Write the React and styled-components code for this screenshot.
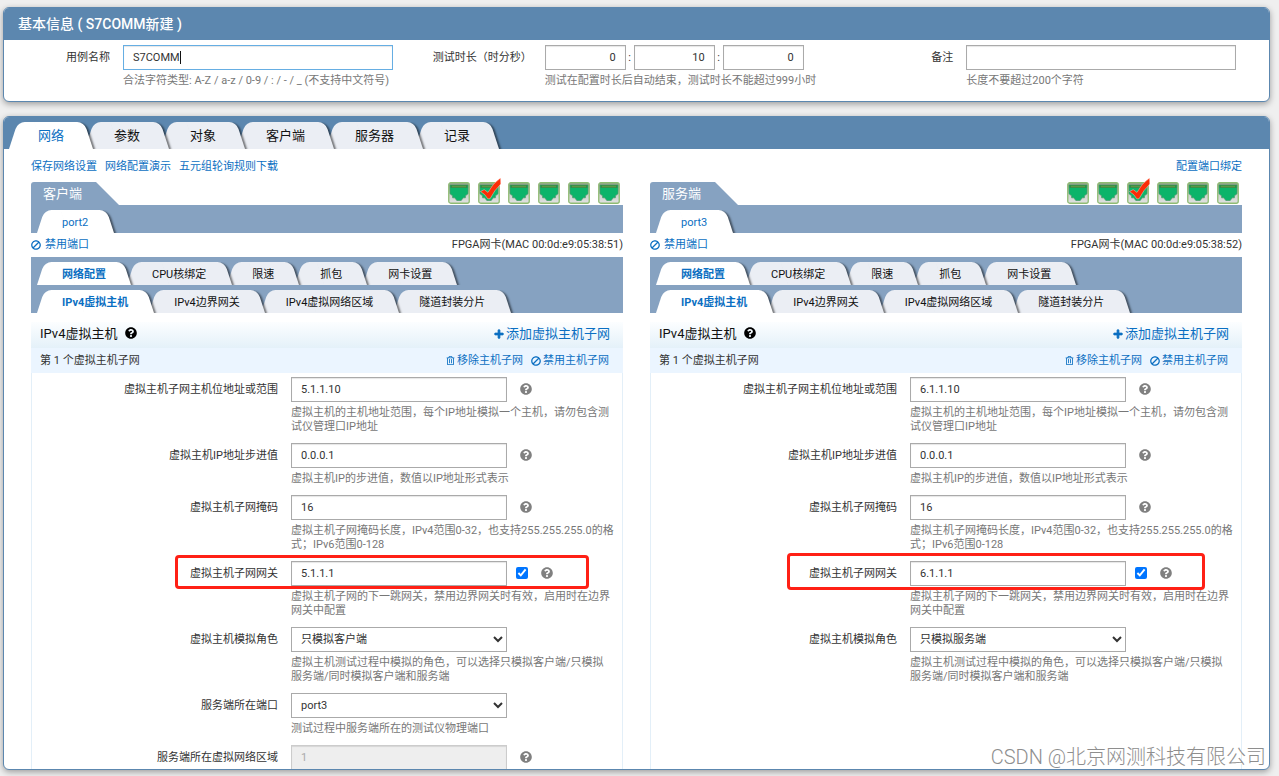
import React, { useEffect, useId, useRef, useState } from "react";
import styled, { createGlobalStyle, css } from "styled-components";
import { FaBan, FaPlus, FaQuestionCircle, FaRegTrashAlt } from "react-icons/fa";

const GlobalStyle = createGlobalStyle`
  * { box-sizing: border-box; }
  body {
    margin: 0;
    background: #efefef;
    color: #333;
    font-family: Roboto, "Noto Sans CJK SC", sans-serif;
    font-size: 11px;
    line-height: 14px;
  }
  button, input, select { font: inherit; }
`;

const Page = styled.main`
  position: relative;
  display: flex;
  flex-direction: column;
  gap: 14px;
  height: 100vh;
  padding: 7px 9px 6px 3px;
  overflow: hidden;
`;

const Panel = styled.section`
  display: flex;
  flex-direction: column;
  flex: ${({ $fill }) => ($fill ? "1 1 0" : "none")};
  min-height: 0;
  overflow: hidden;
  background: #fff;
  border: 1px solid #5c87af;
  border-radius: 6px;
  box-shadow: 0 2px 6px rgba(0, 0, 0, 0.35);
`;

const PanelHeader = styled.header`
  display: flex;
  flex: none;
  align-items: ${({ $tabs }) => ($tabs ? "flex-end" : "center")};
  height: 32px;
  padding: ${({ $tabs }) => ($tabs ? "0 5px" : "0 14px")};
  background: #5c87af;
`;

const PanelTitle = styled.h1`
  margin: 0;
  color: #fff;
  font-size: 14px;
  line-height: 20px;
  font-weight: 500;
`;

const InfoForm = styled.form`
  display: grid;
  grid-template-columns: repeat(3, 1fr);
  padding: 5px 0 13px;
`;

const Row = styled.div`
  position: relative;
  display: grid;
  grid-template-columns: ${({ $wide }) => ($wide ? "259px" : "119px")} 1fr;
  padding: ${({ $wide }) => ($wide ? "0 8px 9px 0" : "0")};
`;

const Label = styled.label`
  padding-right: 13px;
  line-height: 25px;
  text-align: right;
  color: #333;
`;

const Controls = styled.div`
  position: relative;
  display: flex;
  align-items: center;
  height: 25px;
`;

const fieldBox = css`
  width: ${({ $size }) => ({ lg: "270px", md: "216px", sm: "81px" })[$size]};
  height: 25px;
  border: 1px solid #aaa;
  border-radius: 0;
  background: #fff;
  color: #333;
  outline: none;

  &:focus { border-color: #66aee3; }
  &:disabled {
    border-color: #ccc;
    background: #eee;
    color: #aaa;
  }
`;

const Input = styled.input`
  ${fieldBox}
  padding: 0 9px;
  text-align: ${({ $size }) => ($size === "sm" ? "right" : "left")};
  caret-color: ${({ $hideCaret }) => ($hideCaret ? "transparent" : "auto")};
  box-shadow: inset 0 1px 1px rgba(0, 0, 0, 0.1);
`;

const Caret = styled.span`
  position: absolute;
  top: 6px;
  left: 57px;
  width: 1px;
  height: 13px;
  background: #111;
  pointer-events: none;
`;

const Select = styled.select`
  ${fieldBox}
  padding: 0 0 0 5px;
`;

const Colon = styled.span`
  width: 8px;
  text-align: center;
`;

const Hint = styled.p`
  margin: 4px 0 0;
  color: #777;
`;

const Checkbox = styled.input`
  width: 12px;
  height: 12px;
  margin: 0 0 1px 9px;
  accent-color: #0075ff;
`;

const IconButton = styled.button`
  display: inline-flex;
  margin-left: ${({ $dark }) => ($dark ? "8px" : "13px")};
  padding: 0 0 2px;
  border: 0;
  background: none;
  color: ${({ $dark }) => ($dark ? "#000" : "#808080")};
  font-size: 12px;
  cursor: pointer;
`;

const BanIcon = styled(FaBan)`
  transform: scaleX(-1);
`;

const PlusIcon = styled(FaPlus)`
  stroke: currentColor;
  stroke-width: 40px;
`;

const Marker = styled.div`
  position: absolute;
  z-index: 2;
  pointer-events: none;
  border: 3px solid #ff2015;
  border-radius: 4px;
  ${({ $tall }) =>
    $tall
      ? css`
          top: -8px;
          left: 136px;
          width: 418px;
          height: 37px;
        `
      : css`
          top: -6px;
          left: 143px;
          width: 414px;
          height: 34px;
        `}
`;

const TabStrip = styled.nav`
  display: flex;
  align-items: flex-end;
  height: ${({ $large }) => ($large ? "27px" : "28px")};
  padding: ${({ $large }) => ($large ? "0 12px 0 0" : "0 6px")};
  overflow: hidden;
  background: ${({ $large }) => ($large ? "transparent" : "#86a2c1")};
`;

const Tab = styled.button`
  position: relative;
  z-index: ${({ $order }) => 20 - $order};
  isolation: isolate;
  flex: none;
  height: ${({ $large }) => ($large ? "27px" : "23px")};
  margin-right: ${({ $large }) => ($large ? "-8px" : "-4px")};
  padding: ${({ $large }) => ($large ? "0 29px" : "2px 25px 0")};
  border: 0;
  background: none;
  color: ${({ $active }) => ($active ? "#0b6fc2" : "#111")};
  font-size: ${({ $large }) => ($large ? "13px" : "11px")};
  font-weight: ${({ $bold }) => ($bold ? 700 : 400)};
  white-space: nowrap;
  cursor: pointer;

  &::before,
  &::after {
    content: "";
    position: absolute;
    z-index: -1;
    top: 0;
    bottom: 0;
    width: 60%;
    background: ${({ $active }) => ($active ? "#fff" : "#ebeef4")};
  }
  &::before {
    left: 0;
    border-radius: 7px 0 0 0;
    transform: skewX(-18deg);
    transform-origin: bottom left;
  }
  &::after {
    right: 0;
    border-radius: 0 7px 0 0;
    box-shadow: 2px 1px 2px rgba(0, 0, 0, 0.5);
    clip-path: inset(0 -6px 0 0);
    transform: skewX(18deg);
    transform-origin: bottom right;
  }
`;

const Body = styled.div`
  padding: 0 27px;
  display: flex;
  flex-direction: column;
  flex: 1;
  min-height: 0;
`;

const LinkBar = styled.div`
  display: flex;
  flex: none;
  align-items: center;
  gap: 8px;
  height: 33px;
  padding-top: 2px;
`;

const Link = styled.a`
  display: inline-flex;
  align-items: center;
  gap: ${({ $gap }) => $gap || 0}px;
  color: #0b6fc2;
  font-size: ${({ $large }) => ($large ? "13px" : "11px")};
  text-decoration: none;
  &:hover { text-decoration: underline; }
`;

const Spacer = styled.span`
  flex: 1;
`;

const Columns = styled.div`
  display: grid;
  grid-template-columns: 1fr 1fr;
  gap: 27px;
  flex: 1;
`;

const Column = styled.section`
  display: flex;
  flex-direction: column;
  min-width: 0;
`;

const ColumnHead = styled.header`
  display: flex;
  justify-content: space-between;
  height: 23px;
`;

const ColumnTitle = styled.h2`
  margin: 0;
  width: 88px;
  padding-left: 12px;
  background: #86a2c1;
  border-radius: 3px 0 0 0;
  clip-path: polygon(0 0, 65px 0, 100% 100%, 0 100%);
  color: #fff;
  font-size: 13px;
  font-weight: 400;
  line-height: 24px;
`;

const Ports = styled.div`
  display: flex;
  gap: 8px;
  padding-right: 3px;
`;

const PortButton = styled.button`
  width: 22px;
  height: 22px;
  padding: 0;
  border: 0;
  background: none;
  cursor: pointer;

  svg {
    display: block;
    overflow: visible;
  }
`;

const PortStatus = styled.div`
  display: flex;
  align-items: center;
  justify-content: space-between;
  height: 24px;
`;

const Card = styled.div`
  display: flex;
  flex-direction: column;
  flex: 1;
  margin-top: 9px;
`;

const CardHead = styled.header`
  display: flex;
  align-items: center;
  height: 26px;
  padding: 0 13px 2px 9px;
  background: linear-gradient(#fcfeff, #e4f1f9);
`;

const CardTitle = styled.h3`
  margin: 0;
  color: #111;
  font-size: 13px;
  line-height: 20px;
  font-weight: 400;
`;

const SubHead = styled.div`
  display: flex;
  align-items: center;
  gap: 8px;
  height: 25px;
  padding: 0 14px 0 9px;
  background: #ebf5ff;
`;

const HostForm = styled.form`
  flex: 1;
  padding-top: 4px;
  border: solid #e3eff8;
  border-width: 0 1px;
`;

const Watermark = styled.div`
  position: absolute;
  right: 13px;
  bottom: 5px;
  color: #8e8e8e;
  font-size: 20px;
  line-height: 28px;
  font-weight: 300;
  text-shadow: 1px 1px 0 #fff;
  pointer-events: none;
`;

const MAIN_TABS = ["网络", "参数", "对象", "客户端", "服务器", "记录"];
const CARD_TABS = ["网络配置", "CPU核绑定", "限速", "抓包", "网卡设置"];
const NET_TABS = ["IPv4虚拟主机", "IPv4边界网关", "IPv4虚拟网络区域", "隧道封装分片"];
const ROLES = ["只模拟客户端", "只模拟服务端", "同时模拟客户端和服务端"];

const baseFields = (ip, gateway, role) => [
  {
    label: "虚拟主机子网主机位地址或范围",
    value: ip,
    help: true,
    hint: "虚拟主机的主机地址范围，每个IP地址模拟一个主机，请勿包含测试仪管理口IP地址",
  },
  {
    label: "虚拟主机IP地址步进值",
    value: "0.0.0.1",
    help: true,
    hint: "虚拟主机IP的步进值，数值以IP地址形式表示",
  },
  {
    label: "虚拟主机子网掩码",
    value: "16",
    help: true,
    hint: "虚拟主机子网掩码长度，IPv4范围0-32，也支持255.255.255.0的格式；IPv6范围0-128",
  },
  {
    label: "虚拟主机子网网关",
    value: gateway,
    help: true,
    toggle: true,
    marked: true,
    hint: "虚拟主机子网的下一跳网关，禁用边界网关时有效，启用时在边界网关中配置",
  },
  {
    label: "虚拟主机模拟角色",
    value: role,
    options: ROLES,
    hint: "虚拟主机测试过程中模拟的角色，可以选择只模拟客户端/只模拟服务端/同时模拟客户端和服务端",
  },
];

const SIDES = [
  {
    title: "客户端",
    port: "port2",
    mac: "00:0d:e9:05:38:51",
    checked: 1,
    fields: [
      ...baseFields("5.1.1.10", "5.1.1.1", "只模拟客户端"),
      {
        label: "服务端所在端口",
        value: "port3",
        options: ["port3"],
        hint: "测试过程中服务端所在的测试仪物理端口",
      },
      { label: "服务端所在虚拟网络区域", value: "1", help: true, disabled: true },
    ],
  },
  {
    title: "服务端",
    port: "port3",
    mac: "00:0d:e9:05:38:52",
    checked: 2,
    tallMarker: true,
    fields: baseFields("6.1.1.10", "6.1.1.1", "只模拟服务端"),
  },
];

function Tabs({ items, large, bold }) {
  const [current, setCurrent] = useState(0);
  return (
    <TabStrip $large={large}>
      {items.map((name, i) => (
        <Tab
          key={name}
          type="button"
          $order={i}
          $large={large}
          $active={i === current}
          $bold={bold && i === current}
          onClick={() => setCurrent(i)}
        >
          {name}
        </Tab>
      ))}
    </TabStrip>
  );
}

function PortIcon({ checked }) {
  const id = useId();
  return (
    <svg width="22" height="22" viewBox="0 0 22 22" aria-hidden="true">
      <linearGradient id={id} x1="0" y1="0" x2="0" y2="1">
        <stop offset="0" stopColor="#8f9a8b" />
        <stop offset="0.5" stopColor="#c9cdc8" />
        <stop offset="1" stopColor="#e2e2e2" />
      </linearGradient>
      <rect x="0.75" y="0.75" width="20.5" height="20.5" rx="2" fill={`url(#${id})`} stroke="#8fbb72" strokeWidth="1.3" />
      <path d="M2 3h18v8.8l-2.6 2v2h-2.2l-2 2.7H8.8l-2-2.7H4.6v-2l-2.6-2z" fill="#0cb46a" stroke="#4a9a66" strokeWidth="0.7" />
      <path d="M2.5 3h17v3h-17z" fill="#2f8f48" />
      <path d="M4.5 4.5h13" stroke="#8f9a44" strokeWidth="1.6" strokeDasharray="1 1" />
      {checked && (
        <path
          d="M2.5 9.5 6.2 7.6 10 10.4Q14.5 1.5 22.6-4L22.8 2Q16.5 8 12 16.8H9.8Q7 12 2.5 9.5z"
          fill="#fb2c06"
          stroke="#fff"
          strokeOpacity="0.6"
          strokeWidth="0.6"
        />
      )}
    </svg>
  );
}

function HelpButton({ dark }) {
  return (
    <IconButton type="button" aria-label="帮助" $dark={dark}>
      <FaQuestionCircle />
    </IconButton>
  );
}

function HostField({ field, tallMarker }) {
  const id = useId();
  return (
    <Row $wide>
      <Label htmlFor={id}>{field.label}</Label>
      <div>
        <Controls>
          {field.options ? (
            <Select id={id} $size="md" defaultValue={field.value}>
              {field.options.map((option) => (
                <option key={option}>{option}</option>
              ))}
            </Select>
          ) : (
            <Input id={id} $size="md" defaultValue={field.value} disabled={field.disabled} />
          )}
          {field.toggle && <Checkbox type="checkbox" defaultChecked aria-label={`启用${field.label}`} />}
          {field.help && <HelpButton />}
        </Controls>
        {field.hint && <Hint>{field.hint}</Hint>}
      </div>
      {field.marked && <Marker $tall={tallMarker} />}
    </Row>
  );
}

function Side({ side }) {
  return (
    <Column>
      <ColumnHead>
        <ColumnTitle>{side.title}</ColumnTitle>
        <Ports>
          {[0, 1, 2, 3, 4, 5].map((n) => (
            <PortButton key={n} type="button" aria-label={`端口 ${n + 1}`} aria-pressed={n === side.checked}>
              <PortIcon checked={n === side.checked} />
            </PortButton>
          ))}
        </Ports>
      </ColumnHead>
      <Tabs items={[side.port]} />
      <PortStatus>
        <Link href="#" $gap={4}>
          <BanIcon size={10} />
          禁用端口
        </Link>
        <span>FPGA网卡(MAC {side.mac})</span>
      </PortStatus>
      <Tabs items={CARD_TABS} bold />
      <Tabs items={NET_TABS} bold />
      <Card>
        <CardHead>
          <CardTitle>IPv4虚拟主机</CardTitle>
          <HelpButton dark />
          <Spacer />
          <Link href="#" $large $gap={2}>
            <PlusIcon size={10} />
            添加虚拟主机子网
          </Link>
        </CardHead>
        <SubHead>
          <span>第 1 个虚拟主机子网</span>
          <Spacer />
          <Link href="#" $gap={2}>
            <FaRegTrashAlt size={9} />
            移除主机子网
          </Link>
          <Link href="#" $gap={2}>
            <BanIcon size={10} />
            禁用主机子网
          </Link>
        </SubHead>
        <HostForm>
          {side.fields.map((field) => (
            <HostField key={field.label} field={field} tallMarker={side.tallMarker} />
          ))}
        </HostForm>
      </Card>
    </Column>
  );
}

function BasicInfo() {
  const nameRef = useRef(null);
  const [pristine, setPristine] = useState(true);

  useEffect(() => {
    const el = nameRef.current;
    el.focus();
    el.setSelectionRange(el.value.length, el.value.length);
  }, []);

  return (
    <Panel>
      <PanelHeader>
        <PanelTitle>基本信息 ( S7COMM新建 )</PanelTitle>
      </PanelHeader>
      <InfoForm>
        <Row>
          <Label htmlFor="case-name">用例名称</Label>
          <div>
            <Controls>
              <Input
                id="case-name"
                ref={nameRef}
                $size="lg"
                $hideCaret={pristine}
                defaultValue="S7COMM"
                onKeyDown={() => setPristine(false)}
                onMouseDown={() => setPristine(false)}
                onBlur={() => setPristine(false)}
              />
              {pristine && <Caret />}
            </Controls>
            <Hint>合法字符类型: A-Z / a-z / 0-9 / : / - / _ (不支持中文符号)</Hint>
          </div>
        </Row>
        <Row>
          <Label htmlFor="hours">测试时长（时分秒）</Label>
          <div>
            <Controls>
              <Input id="hours" $size="sm" defaultValue="0" />
              <Colon>:</Colon>
              <Input $size="sm" aria-label="分" defaultValue="10" />
              <Colon>:</Colon>
              <Input $size="sm" aria-label="秒" defaultValue="0" />
            </Controls>
            <Hint>测试在配置时长后自动结束，测试时长不能超过999小时</Hint>
          </div>
        </Row>
        <Row>
          <Label htmlFor="remark">备注</Label>
          <div>
            <Controls>
              <Input id="remark" $size="lg" />
            </Controls>
            <Hint>长度不要超过200个字符</Hint>
          </div>
        </Row>
      </InfoForm>
    </Panel>
  );
}

export default function App() {
  return (
    <Page>
      <GlobalStyle />
      <BasicInfo />
      <Panel $fill>
        <PanelHeader $tabs>
          <Tabs items={MAIN_TABS} large />
        </PanelHeader>
        <Body>
          <LinkBar>
            <Link href="#">保存网络设置</Link>
            <Link href="#">网络配置演示</Link>
            <Link href="#">五元组轮询规则下载</Link>
            <Spacer />
            <Link href="#">配置端口绑定</Link>
          </LinkBar>
          <Columns>
            {SIDES.map((side) => (
              <Side key={side.port} side={side} />
            ))}
          </Columns>
        </Body>
      </Panel>
      <Watermark>CSDN @北京网测科技有限公司</Watermark>
    </Page>
  );
}
